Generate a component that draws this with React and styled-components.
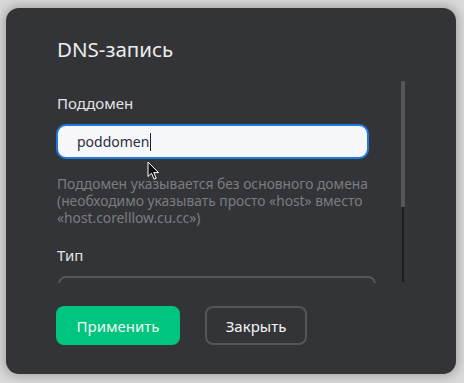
import React from "react";
import styled, { createGlobalStyle } from "styled-components";

const Global = createGlobalStyle`
  html, body { margin: 0; padding: 0; }
  body {
    width: 464px;
    height: 383px;
    overflow: hidden;
    background: #d9d9da;
    font-family: "Noto Sans", "Open Sans", sans-serif;
  }
`;

const Page = styled.div`
  position: relative;
  width: 464px;
  height: 383px;
  padding: 8px 8px 9px 6px;
  box-sizing: border-box;
  display: flex;
`;

const Modal = styled.div`
  flex: 1;
  background: #333438;
  border-radius: 13px;
  box-shadow: 0 0 10px 3px rgba(0, 0, 0, 0.22);
  padding: 27px 50px 29px 50px;
  display: flex;
  flex-direction: column;
`;

const Title = styled.h2`
  margin: 0;
  font-size: 20.5px;
  font-weight: 400;
  line-height: 28px;
  color: #ececec;
  padding-left: 1px;
`;

const Divider = styled.div`
  height: 2px;
  background: #434448;
  margin-top: 8px;
`;

const ScrollArea = styled.div`
  margin-top: 9px;
  height: 203px;
  display: flex;
`;

const ScrollContent = styled.div`
  flex: 1;
  overflow: hidden;
`;

const ScrollBar = styled.div`
  width: 4px;
  margin: 1px 1px 1px 0;
  display: flex;
  flex-direction: column;
  align-items: center;
`;

const Thumb = styled.div`
  width: 4px;
  height: 126px;
  background: #56575b;
  border-radius: 1px;
`;

const Track = styled.div`
  width: 2px;
  flex: 1;
  background: #1c1d20;
`;

const Field = styled.div`
  display: flex;
  flex-direction: column;
  padding-top: ${(p) => p.$top}px;
`;

const Label = styled.label`
  font-size: 15px;
  line-height: 20px;
  color: #e3e3e3;
  padding-left: 1px;
`;

const Input = styled.div`
  margin-top: 11px;
  width: 313px;
  height: 35px;
  box-sizing: border-box;
  border: 2px solid #1f7ae0;
  border-radius: 10px;
  background: #f6f7fa;
  display: flex;
  align-items: center;
  padding-left: 19px;
  font-size: 14px;
  color: #2d2e3a;
`;

const Caret = styled.span`
  display: inline-block;
  width: 1px;
  height: 18px;
  background: #222;
  margin-left: 1px;
`;

const Hint = styled.p`
  margin: 16px 0 0 0;
  font-size: 13.8px;
  line-height: 17px;
  color: #7b7c80;
  padding-left: 1px;
`;

const Select = styled.div`
  margin-top: 11px;
  margin-left: 2px;
  width: 318px;
  height: 40px;
  flex: none;
  box-sizing: border-box;
  border: 2px solid #56575b;
  border-radius: 8px;
`;

const Footer = styled.div`
  margin-top: 23px;
  display: flex;
  gap: 25px;
`;

const Button = styled.button`
  height: 39px;
  width: ${(p) => p.$w}px;
  box-sizing: border-box;
  border-radius: 8px;
  font-family: inherit;
  font-size: 15px;
  color: #f4f4f4;
  cursor: pointer;
  padding: 0;
  background: ${(p) => (p.$primary ? "#00c57f" : "transparent")};
  border: ${(p) => (p.$primary ? "none" : "2px solid #55565a")};
`;

const Pointer = styled.svg`
  position: absolute;
  left: 147px;
  top: 161px;
`;

export default function App() {
  return (
    <>
      <Global />
      <Page>
        <Modal>
          <Title>DNS-запись</Title>
          <Divider />
          <ScrollArea>
            <ScrollContent>
              <Field $top={13}>
                <Label>Поддомен</Label>
                <Input>
                  poddomen
                  <Caret />
                </Input>
                <Hint>
                  Поддомен указывается без основного домена (необходимо
                  указывать просто «host» вместо «host.corelllow.cu.cc»)
                </Hint>
              </Field>
              <Field $top={19}>
                <Label>Тип</Label>
                <Select />
              </Field>
            </ScrollContent>
            <ScrollBar>
              <Thumb />
              <Track />
            </ScrollBar>
          </ScrollArea>
          <Footer>
            <Button $primary $w={124}>Применить</Button>
            <Button $w={102}>Закрыть</Button>
          </Footer>
        </Modal>
        <Pointer width="13" height="20" viewBox="0 0 13 20">
          <path
            d="M1 1 L1 15.5 L4.5 12.3 L7 18.2 L9.2 17.2 L6.8 11.6 L11.5 11.6 Z"
            fill="#111"
            stroke="#fff"
            strokeWidth="1"
            strokeLinejoin="round"
          />
        </Pointer>
      </Page>
    </>
  );
}
